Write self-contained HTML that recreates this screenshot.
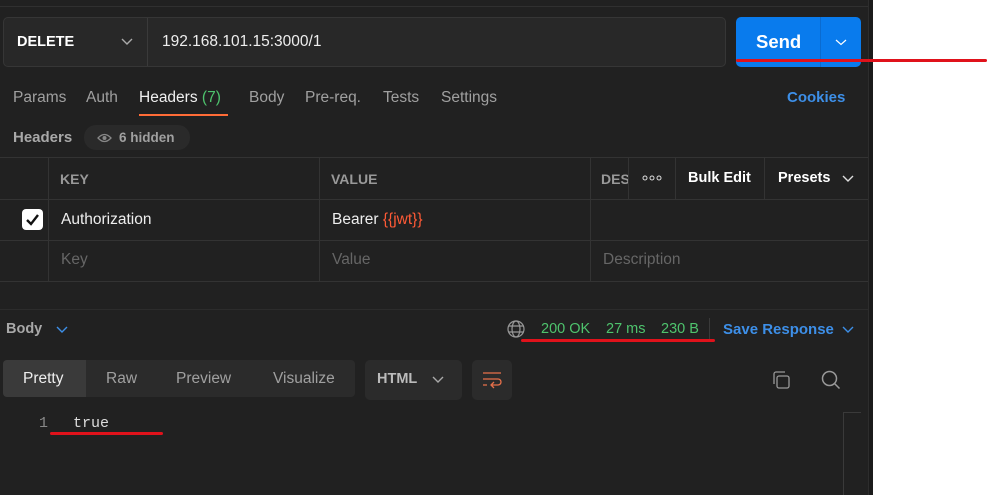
<!DOCTYPE html>
<html><head><style>
*{margin:0;padding:0;box-sizing:border-box}
body{width:987px;height:495px;background:#fff;font-family:"Liberation Sans",Arial,sans-serif;position:relative;overflow:hidden}
.app{position:absolute;left:0;top:0;width:870px;height:495px;background:#212121}
.vb{position:absolute;left:868px;top:0;width:5px;height:495px;background:#1b1b1b;border-left:1px solid #2d2d2d}
.a{position:absolute;white-space:nowrap}
.hl{position:absolute;left:0;width:868px;height:1px;background:#333}
.vl{position:absolute;width:1px;background:#333}
</style></head><body>
<div class="app">
<div class="hl" style="top:6px;background:#303030"></div>
<div class="a" style="left:3px;top:17px;width:723px;height:50px;background:#282828;border:1px solid #363636;border-radius:5px"></div>
<div class="a" style="left:147px;top:18px;width:1px;height:48px;background:#3a3a3a"></div>
<div class="a" style="left:17px;top:34px;color:#fff;font-weight:bold;font-size:14.5px">DELETE</div>
<svg class="a" style="left:121px;top:38px" width="12" height="8"><path d="M1 1l5 5 5-5" stroke="#aaa" fill="none" stroke-width="1.4"/></svg>
<div class="a" style="left:162px;top:33px;color:#eee;font-size:15.5px">192.168.101.15:3000/1</div>
<div class="a" style="left:736px;top:17px;width:125px;height:50px;background:#097bed;border-radius:5px"></div>
<div class="a" style="left:820px;top:17px;width:1px;height:50px;background:#0a6bd0"></div>
<div class="a" style="left:756px;top:31px;color:#fff;font-weight:bold;font-size:18.5px">Send</div>
<svg class="a" style="left:835px;top:39px" width="12" height="7"><path d="M1 1l5 4.5 5-4.5" stroke="#fff" fill="none" stroke-width="1.2"/></svg>
<div class="a" style="top:89px;left:13px;font-size:15.5px;color:#a0a0a0">Params</div>
<div class="a" style="top:89px;left:86px;font-size:15.5px;color:#a0a0a0">Auth</div>
<div class="a" style="top:89px;left:139px;font-size:15.5px;color:#f0f0f0">Headers <span style="color:#4ec36d">(7)</span></div>
<div class="a" style="left:139px;top:114px;width:89px;height:2px;background:#ff6c37"></div>
<div class="a" style="top:89px;left:249px;font-size:15.5px;color:#a0a0a0">Body</div>
<div class="a" style="top:89px;left:305px;font-size:15.5px;color:#a0a0a0">Pre-req.</div>
<div class="a" style="top:89px;left:383px;font-size:15.5px;color:#a0a0a0">Tests</div>
<div class="a" style="top:89px;left:441px;font-size:15.5px;color:#a0a0a0">Settings</div>
<div class="a" style="top:89px;left:787px;font-size:15px;color:#3d8fe8;font-weight:bold">Cookies</div>
<div class="a" style="top:129px;left:13px;font-size:15px;color:#a8a8a8;font-weight:bold">Headers</div>
<div class="a" style="left:84px;top:125px;width:106px;height:25px;background:#2a2a2a;border-radius:12px"></div>
<svg class="a" style="left:97px;top:133px" width="15" height="10"><path d="M1 5Q7.5-2 14 5Q7.5 12 1 5Z" stroke="#888" fill="none" stroke-width="1.3"/><circle cx="7.5" cy="5" r="2" fill="#888"/></svg>
<div class="a" style="top:130px;left:119px;font-size:13.5px;color:#a0a0a0;font-weight:bold">6 hidden</div>
<div class="hl" style="top:157px"></div>
<div class="hl" style="top:199px"></div>
<div class="hl" style="top:240px"></div>
<div class="hl" style="top:281px"></div>
<div class="hl" style="top:309px;background:#2c2c2c"></div>
<div class="vl" style="left:48px;top:158px;height:123px"></div>
<div class="vl" style="left:319px;top:158px;height:123px"></div>
<div class="vl" style="left:590px;top:158px;height:123px"></div>
<div class="vl" style="left:628px;top:158px;height:41px"></div>
<div class="vl" style="left:675px;top:158px;height:41px"></div>
<div class="vl" style="left:764px;top:158px;height:41px"></div>
<div class="a" style="top:171px;left:60px;font-size:14px;color:#999;font-weight:bold">KEY</div>
<div class="a" style="top:171px;left:331px;font-size:14px;color:#999;font-weight:bold">VALUE</div>
<div class="a" style="top:171px;left:601px;width:27px;overflow:hidden;font-size:14px;color:#999;font-weight:bold">DESC</div>
<svg class="a" style="left:642px;top:175px" width="20" height="6"><circle cx="3" cy="3" r="2" stroke="#ddd" fill="none"/><circle cx="10" cy="3" r="2" stroke="#ddd" fill="none"/><circle cx="17" cy="3" r="2" stroke="#ddd" fill="none"/></svg>
<div class="a" style="top:170px;left:688px;font-size:14.5px;color:#fff;font-weight:bold">Bulk Edit</div>
<div class="a" style="top:170px;left:778px;font-size:14.5px;color:#fff;font-weight:bold">Presets</div>
<svg class="a" style="left:842px;top:175px" width="12" height="8"><path d="M1 1l5 5 5-5" stroke="#ddd" fill="none" stroke-width="1.4"/></svg>
<div class="a" style="left:22px;top:209px;width:21px;height:21px;background:#fff;border-radius:4px"></div>
<svg class="a" style="left:25px;top:213px" width="15" height="13"><path d="M2 7l4 4 7-9" stroke="#111" fill="none" stroke-width="2.4"/></svg>
<div class="a" style="top:211px;left:61px;font-size:15.5px;color:#eee">Authorization</div>
<div class="a" style="top:211px;left:332px;font-size:15.5px;color:#eee">Bearer <span style="color:#ff5a36">{{jwt}}</span></div>
<div class="a" style="top:251px;left:61px;font-size:15.5px;color:#666">Key</div>
<div class="a" style="top:251px;left:332px;font-size:15.5px;color:#666">Value</div>
<div class="a" style="top:251px;left:603px;font-size:15.5px;color:#666">Description</div>
<div class="a" style="top:321px;left:6px;font-size:14.5px;color:#a8a8a8;font-weight:bold">Body</div>
<svg class="a" style="left:56px;top:326px" width="12" height="8"><path d="M1 1l5 5 5-5" stroke="#3d8fe8" fill="none" stroke-width="1.4"/></svg>
<svg class="a" style="left:507px;top:320px" width="18" height="18" fill="none" stroke="#999" stroke-width="1.2"><circle cx="9" cy="9" r="8"/><ellipse cx="9" cy="9" rx="4" ry="8"/><path d="M1.5 6h15M1.5 12h15"/></svg>
<div class="a" style="top:321px;left:541px;font-size:14.5px;color:#4ec36d">200 OK</div>
<div class="a" style="top:321px;left:606px;font-size:14.5px;color:#4ec36d">27 ms</div>
<div class="a" style="top:321px;left:661px;font-size:14.5px;color:#4ec36d">230 B</div>
<div class="a" style="left:709px;top:318px;width:1px;height:22px;background:#3a3a3a"></div>
<div class="a" style="top:321px;left:723px;font-size:15px;color:#3d8fe8;font-weight:bold">Save Response</div>
<svg class="a" style="left:842px;top:326px" width="12" height="8"><path d="M1 1l5 5 5-5" stroke="#3d8fe8" fill="none" stroke-width="1.4"/></svg>
<div class="a" style="left:3px;top:360px;width:352px;height:37px;background:#2b2b2b;border-radius:4px"></div>
<div class="a" style="left:3px;top:360px;width:83px;height:37px;background:#3a3a3a;border-radius:4px 0 0 4px"></div>
<div class="a" style="top:370px;left:23px;font-size:15.5px;color:#eee">Pretty</div>
<div class="a" style="top:370px;left:106px;font-size:15.5px;color:#a0a0a0">Raw</div>
<div class="a" style="top:370px;left:176px;font-size:15.5px;color:#a0a0a0">Preview</div>
<div class="a" style="top:370px;left:273px;font-size:15.5px;color:#a0a0a0">Visualize</div>
<div class="a" style="left:365px;top:360px;width:97px;height:40px;background:#2b2b2b;border-radius:5px"></div>
<div class="a" style="top:371px;left:377px;font-size:14.5px;color:#bbb;font-weight:bold">HTML</div>
<svg class="a" style="left:432px;top:376px" width="12" height="8"><path d="M1 1l5 5 5-5" stroke="#aaa" fill="none" stroke-width="1.4"/></svg>
<div class="a" style="left:472px;top:360px;width:40px;height:40px;background:#2b2b2b;border-radius:5px"></div>
<svg class="a" style="left:482px;top:371px" width="20" height="18" fill="none" stroke="#e8704a" stroke-width="1.3"><path d="M1 2h18M1 8h15a3 3 0 0 1 0 6h-6M12 11l-3 3 3 3M1 14h4"/></svg>
<svg class="a" style="left:771px;top:370px" width="20" height="20" fill="none" stroke="#999" stroke-width="1.3"><rect x="6" y="6" width="12" height="12" rx="2"/><path d="M3 14V4a2 2 0 0 1 2-2h9"/></svg>
<svg class="a" style="left:821px;top:370px" width="20" height="20" fill="none" stroke="#999" stroke-width="1.5"><circle cx="8.5" cy="8.5" r="7"/><path d="M13.5 13.5l5 5"/></svg>
<div class="a" style="top:415px;left:39px;font-size:15px;color:#888;font-family:'Liberation Mono',monospace">1</div>
<div class="a" style="top:415px;left:73px;font-size:15px;color:#ddd;font-family:'Liberation Mono',monospace">true</div>
<div class="a" style="left:843px;top:412px;width:18px;height:83px;border-left:1px solid #3a3a3a;border-top:1px solid #3a3a3a"></div>
</div>
<div class="vb"></div>
<div class="a" style="left:736px;top:59px;width:251px;height:3px;background:#e0121b;border-radius:2px"></div>
<div class="a" style="left:521px;top:339px;width:194px;height:3px;background:#e0121b;border-radius:2px"></div>
<div class="a" style="left:50px;top:432px;width:113px;height:3px;background:#e0121b;border-radius:2px"></div>
</body></html>
